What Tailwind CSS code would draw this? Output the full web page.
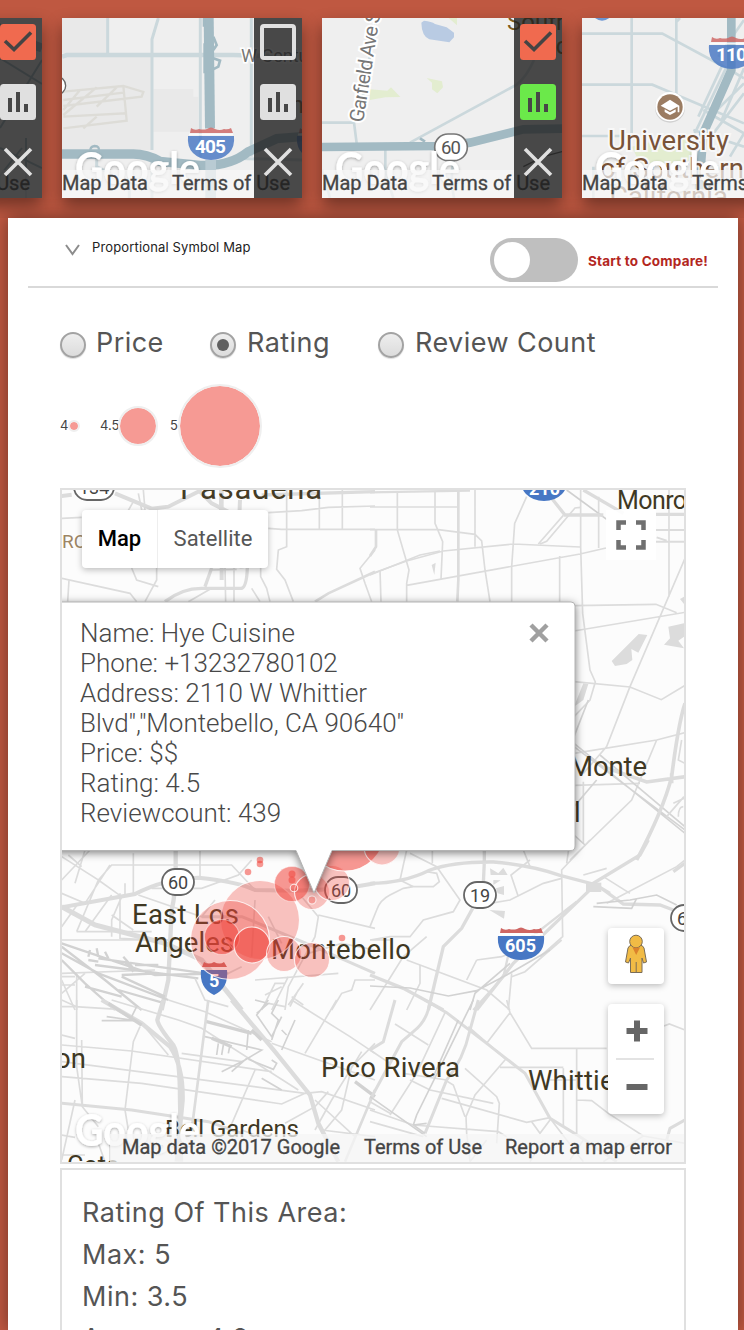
<!DOCTYPE html>
<html lang="en">
<head>
<meta charset="utf-8">
<title>Proportional Symbol Map</title>
<script src="https://cdn.jsdelivr.net/npm/@tailwindcss/browser@4"></script>
</head>
<body class="w-[744px] h-[1330px] overflow-hidden bg-[#bf5841] font-['Inter',sans-serif]">

<!-- shared symbols -->
<svg class="absolute w-0 h-0" aria-hidden="true">
  <defs>
    <filter id="soft" x="-20%" y="-20%" width="140%" height="160%"><feDropShadow dx="0" dy="1" stdDeviation="1.8" flood-color="#000" flood-opacity=".32"/></filter>
    <symbol id="interstate" viewBox="0 0 48 34" overflow="visible">
      <path d="M3 6 L4 1 Q8 4 12 2 Q16 3 20 2 Q24 -1 28 2 Q33 4 37 2 Q41 3 44 1 L46 6 Z" fill="#cf6663"/>
      <path d="M1 9 H47 Q48 20 42 26 Q35 33 24 33 Q13 33 6 26 Q0 20 1 9Z" fill="#4777c4"/>
      <path d="M2 7.5H46" stroke="#fff" stroke-width="2"/>
    </symbol>
    <g id="credits">
      <rect x="0" y="152" width="240" height="28" fill="#f6f6f6" fill-opacity=".72"/>
      <g font-family="Roboto, sans-serif" font-size="20" fill="#444" stroke="#444" stroke-width=".3">
        <text x="0" y="172" textLength="86">Map Data</text>
        <text x="110" y="172" textLength="118">Terms of Use</text>
      </g>
    </g>
    <g id="logo" filter="url(#soft)">
      <text x="13" y="166" font-family="Lato, sans-serif" font-weight="700" font-size="43" fill="#fff" textLength="125" lengthAdjust="spacingAndGlyphs">Google</text>
    </g>
    <g id="bars"><path d="M8 14h4v14h-4zM16 8h4v20h-4zM24 20h4v8h-4z" fill="#474747"/></g>
  </defs>
</svg>

<header class="h-[218px] w-[744px] overflow-hidden">
 <div class="ml-[-198px] flex w-[1020px] gap-5 pt-[18px]">

  <!-- card 1 -->
  <section class="relative h-[180px] w-[240px] shrink-0 bg-[#efefef] shadow-[0_8px_16px_rgba(0,0,0,0.42)]">
    <svg class="block" width="240" height="180" viewBox="0 0 240 180">
      <g fill="none" stroke="#a2bac3"><path d="M185 -10 L198 14 L240 30" stroke-width="9"/><path d="M240 42 L198 110 M198 40 L240 66 M198 130 L240 150 M224 120 V180 M192 165 L220 130" stroke-width="2"/></g>
      <use href="#credits"/>
    </svg>
    <div class="absolute inset-y-0 right-0 flex w-12 flex-col items-center gap-6 bg-[#1e1e1e]/80 pt-[6px]">
      <svg class="shrink-0" width="36" height="36" viewBox="0 0 36 36"><rect width="36" height="36" rx="3.5" fill="#f06a4f"/><path d="M5 17 L14 25.500 L31 8.500" fill="none" stroke="#444" stroke-width="3.600"/></svg>
      <svg class="shrink-0" width="36" height="36" viewBox="0 0 36 36"><rect width="36" height="36" rx="3.5" fill="#e0e0e0"/><use href="#bars"/></svg>
      <svg class="shrink-0" width="36" height="36" viewBox="0 0 36 36"><path d="M5 5 L31 31 M31 5 L5 31" stroke="#e0e0e0" stroke-width="3.600"/></svg>
    </div>
  </section>

  <!-- card 2 -->
  <section class="relative h-[180px] w-[240px] shrink-0 bg-[#efefef] shadow-[0_8px_16px_rgba(0,0,0,0.42)]">
    <svg class="block" width="240" height="180" viewBox="0 0 240 180">
      <g transform="translate(-62 -18) scale(.33333)" fill="none">
        <path d="M186 170H455V450H186Z" fill="#e9e9e9"/><path d="M186 54H322V160H186Z M460 267H580V290H595V395H460Z" fill="#e9e9e9"/>
        <g stroke="#cbd8dc" stroke-width="9"><path d="M186 170 L200 165 H700 L906 172" stroke-width="14"/><path d="M323 54V160"/><path d="M475 54 L456 118 V450"/><path d="M601 54V470"/><path d="M754 54V470"/><path d="M456 470V594 M388 510V594 M640 500V594 M700 475L906 480 M290 470 V500 L330 520"/></g>
        <g stroke="#dddcd7" stroke-width="7"><path d="M190 275 L370 258 L430 276 L425 290 L190 318 M190 300 L370 278 M190 350 L378 340 L380 362 L190 385 M370 258 L378 340 M190 345 L290 262 M240 270 L190 330 M290 320 L350 262 M250 385 L290 350"/></g>
        <g stroke="#a2bac3"><path d="M186 462 H400 Q440 462 480 484 L600 496 Q690 500 745 455 L830 416 L906 410" stroke-width="28"/><path d="M626 50 L630 385" stroke-width="30"/><path d="M612 54V80 M640 110 L650 135 L640 150 M614 130 V190 L614 220 M640 175 L660 182 L655 200 L620 218" stroke-width="8"/><path d="M272 455 Q268 440 284 438 Q300 438 296 455" stroke-width="7"/></g>
        <path d="M632 480V594" stroke="#b9cbd3" stroke-width="32" />
        <circle cx="170" cy="257" r="27" fill="#fff" stroke="#666" stroke-width="4"/>
      </g>
      <text x="179" y="44" font-family="Roboto, sans-serif" font-size="18" fill="#777" stroke="#fff" stroke-width="3" paint-order="stroke">W Century</text>
      <text x="216" y="95" font-family="Roboto, sans-serif" font-size="24" fill="#7d5c3f">enn</text>
      <g opacity=".82"><use href="#interstate" x="125" y="109" width="48" height="34"/><use href="#interstate" x="234" y="109" width="48" height="34"/></g>
      <text x="133" y="135" font-family="Roboto, sans-serif" font-weight="700" font-size="19" fill="#fff" textLength="31">405</text>
      <use href="#logo"/><use href="#credits"/>
    </svg>
    <div class="absolute inset-y-0 right-0 flex w-12 flex-col items-center gap-6 bg-[#1e1e1e]/80 pt-[6px]">
      <svg class="shrink-0" width="36" height="36" viewBox="0 0 36 36"><rect x="2" y="2" width="32" height="32" rx="2" fill="none" stroke="#e0e0e0" stroke-width="4"/></svg>
      <svg class="shrink-0" width="36" height="36" viewBox="0 0 36 36"><rect width="36" height="36" rx="3.5" fill="#e0e0e0"/><use href="#bars"/></svg>
      <svg class="shrink-0" width="36" height="36" viewBox="0 0 36 36"><path d="M5 5 L31 31 M31 5 L5 31" stroke="#e0e0e0" stroke-width="3.600"/></svg>
    </div>
  </section>

  <!-- card 3 -->
  <section class="relative h-[180px] w-[240px] shrink-0 bg-[#efefef] shadow-[0_8px_16px_rgba(0,0,0,0.42)]">
    <svg class="block" width="240" height="180" viewBox="0 0 240 180">
      <g transform="translate(-12 -18) scale(.33333)" fill="none">
        <path d="M334 68 L342 62 Q365 64 375 72 L410 82 L432 98 V112 L418 127 L358 118 Q335 108 334 68Z" fill="#b9cbe3"/>
        <path d="M416 54H441V76Z M350 234 L396 244 L399 262 L382 280 L366 268 V248Z M180 268 L232 272 L243 262 L271 291 L226 292 L180 300Z" fill="#e3edd0"/>
        <g stroke="#cbd8dc" stroke-width="8"><path d="M36 368H132 L140 430"/><path d="M300 428 L620 254 Q650 230 672 180"/><path d="M226 450V520 L250 594 M430 480 Q420 540 432 594 M36 510 L60 594 M200 54 L150 340"/></g>
        <g stroke="#a2bac3"><path d="M36 441 L380 438 L480 428 L640 388 L756 386" stroke-width="26"/><path d="M330 415 L345 425" stroke-width="8"/></g>
        <g stroke="#555" stroke-width="4"><path d="M640 500 L700 470 L756 455"/></g>
        <rect x="374" y="402" width="98" height="80" rx="40" fill="#fff" stroke="#777" stroke-width="5"/>
      </g>
      <g font-family="Roboto, sans-serif"><text x="119" y="136" font-size="18.500" fill="#555" textLength="20">60</text>
      <text x="185" y="12" font-size="24" fill="#7d5c1f">South</text><text x="240" y="36" font-size="24" text-anchor="middle" fill="#7d5c1f">c</text>
      <text transform="translate(41 105) rotate(-81)" font-size="20" fill="#777" stroke="#fff" stroke-width="4" paint-order="stroke" textLength="112">Garfield Ave S</text></g>
      <use href="#logo"/><use href="#credits"/>
    </svg>
    <div class="absolute inset-y-0 right-0 flex w-12 flex-col items-center gap-6 bg-[#1e1e1e]/80 pt-[6px]">
      <svg class="shrink-0" width="36" height="36" viewBox="0 0 36 36"><rect width="36" height="36" rx="3.5" fill="#f06a4f"/><path d="M5 17 L14 25.500 L31 8.500" fill="none" stroke="#444" stroke-width="3.600"/></svg>
      <svg class="shrink-0" width="36" height="36" viewBox="0 0 36 36"><rect width="36" height="36" rx="3.5" fill="#6be94a"/><use href="#bars"/></svg>
      <svg class="shrink-0" width="36" height="36" viewBox="0 0 36 36"><path d="M5 5 L31 31 M31 5 L5 31" stroke="#e0e0e0" stroke-width="3.600"/></svg>
    </div>
  </section>

  <!-- card 4 -->
  <section class="relative h-[180px] w-[240px] shrink-0 bg-[#efefef] shadow-[0_8px_16px_rgba(0,0,0,0.42)]">
    <svg class="block" width="240" height="180" viewBox="0 0 240 180">
      <g transform="translate(-272 -18) scale(.33333)" fill="none">
        <path d="M965 440 L1130 400 L1160 490 L990 490Z" fill="#e3edd0"/>
        <g stroke="#cbd8dc" stroke-width="8"><path d="M816 101H1057 L1260 210 L1302 235"/><path d="M965 54V400 M1099 54V300"/><path d="M816 254H1027 L1302 370"/><path d="M816 408H930"/><path d="M1100 65L1110 54 M1140 430 L1250 200 M1190 360 L1302 250 M1210 400 L1302 280 M1235 360 L1302 205 M1180 330 L1302 400 M1150 390 L1302 440 M1165 350L1235 200 M1302 60 L1225 170 M1260 470 L1302 400"/><path d="M850 500V594 M1060 500V594 M1160 520V594"/></g>
        <path d="M1264 54V210 L1180 400 L1165 594" stroke="#a2bac3" stroke-width="26"/>
        <path d="M855 54 Q876 70 898 54Z" fill="#6b95d3"/>
        <circle cx="1080" cy="323" r="45" fill="#999" opacity=".35"/><circle cx="1080" cy="320" r="44" fill="#fff"/><circle cx="1080" cy="321" r="38" fill="#9b7c62"/>
        <path d="M1052 317 L1080 299 L1108 317 L1080 332Z M1064 328 L1080 337 L1097 328 V336 L1080 345 L1064 336Z M1103 317H1108V337H1103Z" fill="#fff"/>
      </g>
      <g opacity=".82"><use href="#interstate" x="126" y="18" width="48" height="34"/></g>
      <g font-family="Roboto, sans-serif"><text x="134" y="43" font-weight="700" font-size="19" fill="#fff" textLength="31">110</text>
      <g font-size="27.500" fill="#785338" stroke="#f8f8f8" stroke-width="4" paint-order="stroke"><text x="26" y="132" textLength="121">University</text><text x="18" y="160" textLength="144">of Southern</text><text x="28" y="188" textLength="118">California</text></g></g>
      <use href="#logo"/><use href="#credits"/>
    </svg>
  </section>
 </div>
</header>

<main class="relative mx-2 mr-[6px] h-[1112px] bg-white px-5 shadow-[0_0_16px_rgba(0,0,0,0.4)]">

  <div class="flex h-[70px] items-start border-b-2 border-[#d9d9d9] pl-[37px] pr-[10px]">
    <svg class="mt-[25px]" width="15" height="13" viewBox="0 0 15 13"><path d="M1 2 L7.500 11 L14 2" fill="none" stroke="#8c8c8c" stroke-width="2"/></svg>
    <h1 class="ml-3 mt-[19px] whitespace-nowrap text-[13px] leading-5 tracking-[0.15px] text-[#222]">Proportional Symbol Map</h1>
    <div class="ml-auto mt-5 h-11 w-[88px] rounded-full bg-[#bfbfbf] p-1"><div class="size-9 rounded-full bg-white"></div></div>
    <span class="ml-[10px] mt-[33px] w-[120px] whitespace-nowrap text-[13.5px] font-bold leading-5 tracking-[0.2px] text-[#b3261e]">Start to Compare!</span>
  </div>

  <div class="pl-8 pr-8">
    <!-- measure selector -->
    <div class="flex h-[98px] items-start pt-9 text-[27px] leading-[37px] tracking-[0.45px] text-[#555]">
      <label class="flex w-[150px] items-start gap-[10px]"><i class="mt-[8px] size-[26px] shrink-0 rounded-full border-2 border-[#a3a3a3] bg-linear-to-b from-[#eee] to-[#dcdcdc] shadow-[0_1px_1px_#ddd]"></i><span>Price</span></label>
      <label class="flex w-[168px] items-start gap-[11px]"><i class="mt-[8px] flex size-[26px] shrink-0 items-center justify-center rounded-full border-2 border-[#a3a3a3] bg-linear-to-b from-[#eee] to-[#dcdcdc] shadow-[0_1px_1px_#ddd]"><b class="size-3 rounded-full bg-[#606060]"></b></i><span>Rating</span></label>
      <label class="flex items-start gap-[11px] whitespace-nowrap"><i class="mt-[8px] size-[26px] shrink-0 rounded-full border-2 border-[#a3a3a3] bg-linear-to-b from-[#eee] to-[#dcdcdc] shadow-[0_1px_1px_#ddd]"></i><span>Review Count</span></label>
    </div>

    <!-- legend -->
    <div class="flex h-20 items-center text-[13px] text-[#444]">
      <span class="w-[10px]">4</span><i class="size-2 rounded-full bg-[#f69a94] outline-2 outline-[#efefef]"></i>
      <span class="ml-[22px] w-5 whitespace-nowrap">4.5</span><i class="size-9 rounded-full bg-[#f69a94] outline-2 outline-[#efefef]"></i>
      <span class="ml-[14px] w-[10px]">5</span><i class="size-20 rounded-full bg-[#f69a94] outline-2 outline-[#efefef]"></i>
    </div>

    <!-- map -->
    <div class="relative mt-[22px] h-[676px] w-[626px] overflow-hidden border-2 border-[#e0e0e0] bg-[#fcfcfc]">
      <svg class="block" width="622" height="672" viewBox="62 490 622 672">
        <!-- north-west streets -->
        <g transform="translate(55 480) scale(.33333)" fill="none" stroke="#dcdcdc" stroke-width="5">
          <path d="M20 48 L50 44 M180 40 L290 86 L340 80 L440 30 M500 30 V300 M430 30 L470 70 L520 95" stroke-width="12"/>
          <path d="M620 45 L960 35" stroke-width="10"/>
          <path d="M497 30V90 M470 264 L450 320 M330 365 Q380 325 440 325 H560 Q575 320 577 264" stroke-width="10"/>
          <path d="M20 115 L80 112 M20 295 L225 340 L245 365 M42 300 L38 365 M250 40 L260 90 M235 65 L215 100 L270 90 L265 30 M230 264 L245 300 L310 320 M305 264 V300 L270 365"/>
          <path d="M640 98 L740 92 L820 82 L960 78 M640 145 L680 148 H960 M695 30 V200 L670 210 L665 268 L690 300 L715 365 M793 30V148 M862 30V148 M960 210 L915 265 L930 310 L950 365 M617 264 V290 L635 325 L645 365 M510 264 L512 365 M537 264V365 M470 270 L545 268 M400 365 L470 325 M590 325 L615 365"/>
          <path d="M780 365 L820 340 L960 275" stroke-width="8"/><path d="M555 60 Q550 160 560 265" stroke-width="12"/>
        </g>
        <!-- north-east streets -->
        <g transform="translate(370 480) scale(.33333)" fill="none" stroke="#dcdcdc" stroke-width="5">
          <path d="M0 37 L300 32" stroke-width="7"/><path d="M265 35V300 L262 365 M18 150V200 L0 228" stroke-width="8"/>
          <path d="M0 81H262 M0 149H205 L315 163 L335 183 L345 270 L360 365 M82 35V150 L117 270 L110 310 V365 M195 35V130 L218 185 L213 298 M315 30V200 M110 316 L630 222 L708 204 M0 283 L110 243 L220 213 L430 192 L630 201 M425 365 V260 L434 130 L470 50 M30 270 L33 365 M569 228V365 M632 30V201 L638 400 L660 570 L676 606 L660 660 L612 710 M686 50V204"/>
          <path d="M590 30 L710 118" stroke="#d0d0d0"/><path d="M0 285 L150 225 L210 213 M505 192 L580 106 M510 192 L530 184 L615 84 L632 82"/>
          <path d="M640 30 L760 100 M545 55 L585 105 H700 M858 103H945" stroke-width="10"/><path d="M858 150H945 M858 185H945 M860 172L890 182" stroke-width="6"/>
          <path d="M897 30V350 M945 235 L780 620 L710 800 L640 880 M612 377 L858 373 L920 398 M612 453 L945 397 M612 605 L780 621 L874 659 L945 616 M612 820 L860 780 L945 758 M612 916 L810 910 M860 780 L785 960 L600 1140 M640 905V1090"/>
          <path d="M612 790 L945 1060 M612 800 L945 1050 M690 825 L945 1040 M680 900L612 980 M612 1065L645 1095 M612 770L655 660" stroke="#d4d4d4"/>
          <path d="M700 860 L830 906 L945 890 M905 880V910 M945 670 Q925 730 905 890 Q880 990 800 1140" stroke-width="11"/>
          <path d="M725 543 L806 462 L832 465 L805 518 L784 507 L787 540 L770 552 L735 558Z M895 440 L942 430 V470 L925 482 L942 505 L882 494 L900 475Z M930 357 L942 350 V372Z M185 255 L197 248 L193 285Z M612 680 L640 610 L655 612 L640 660Z" fill="#dcdcdc" stroke="none"/>
          <path d="M910 970 L942 955 M890 1010 L942 950 M925 1010 Q925 980 940 980 M935 780L925 840 L945 850"/>
        </g>
        <!-- central-west streets -->
        <g transform="translate(55 840) scale(.33333)" fill="none" stroke="#dcdcdc" stroke-width="5">
          <path d="M362 30V90 Q362 160 350 210 L340 420 L320 510" stroke-width="13"/>
          <path d="M20 202 L240 162 Q330 115 430 113 Q550 125 600 150 L720 152 Q860 150 960 130" stroke-width="12"/>
          <path d="M20 200 L120 255 L330 310 L440 360 L560 510" stroke-width="15"/>
          <path d="M440 230 L560 230 Q760 310 960 400" stroke-width="9"/>
          <path d="M20 50 L130 120 L170 75 H530 L600 150 M20 120 L105 30 M20 160 L90 190 L165 75 M60 130 L90 30 M40 45L80 80 M130 120 L200 170 L170 240 V290 M65 275 L130 120 M170 225L235 270 M195 160V295 L290 300 M90 275L170 165 M70 190L20 260 M210 130V170 M235 40V160 M435 30V110 M20 300H340 M65 275 H290 M290 145H440 L550 105 L590 60"/>
          <path d="M740 170 L790 230 L780 290 L700 440 L690 510 M790 225 L960 265 M600 180 L590 350 M640 230 L680 310 M960 330 L860 310 L760 340 M430 400 H520 L560 380 M250 165 L440 230 L480 180 M20 400 L300 390 M20 420 L60 510 M65 400V510 M20 410H60 M20 435H60 M20 460L90 400"/>
          <g stroke="#d2d2d2" stroke-width="7"><path d="M20 340 L130 400 L340 480 M20 320 L150 420 L260 510 M20 310 L300 405 L520 400 M20 360 L90 430 L180 510 M130 355 L450 400 M120 375 L430 415 M100 360L130 365 M105 330L100 350 M125 325L130 350 M150 335L160 355 M205 350L240 390 M210 365L235 395 M200 405L310 400 M240 375H310 M200 410L330 470 M190 450 L330 490 M90 440L200 470"/></g>
          <path d="M620 510 L660 430 L690 430 M630 465 L680 440 M640 490L690 500 M700 495 L745 430 M705 500L730 450 M600 420 L850 400 M830 510 L860 460 L890 450 L900 420 H960 M650 510L700 410 M420 415L450 480 L520 500 M20 480L65 500 M710 470 L745 495"/>
        </g>
        <!-- central-east streets -->
        <g transform="translate(370 840) scale(.33333)" fill="none" stroke="#dcdcdc" stroke-width="5">
          <path d="M0 130 Q100 130 180 90 Q250 65 370 66 Q480 75 570 106 L680 135 L760 192 L870 195 L910 210 M343 30V66 L340 130 M308 205 L275 265 L220 320 L175 510 M720 160 L670 130 L810 45 L835 0 M670 140 L430 370 L320 510 M945 70L910 95" stroke-width="10"/>
          <path d="M620 185 L415 345 L400 410 L310 510" stroke-width="7"/><path d="M648 142H694" stroke-width="28"/>
          <path d="M20 210 Q30 180 60 165 L100 145 L130 140 L190 140 L208 125 L200 100 L170 95 M20 210 L0 260 M110 30 L90 120 L130 140 M187 30V70 M120 40 L200 80 L270 180 L250 215 L160 240 L120 290 H60 L0 300 M480 60 L423 105 L445 170 M360 190 L420 180 L520 130 L575 115 M460 30 L480 80 M660 0 L575 90 L578 290 L510 350 M710 85 L640 105 M700 110 L780 160 M590 70 L600 0 M710 190 L920 80 L945 60 M0 300H60 M170 290 L100 350 L0 510 M110 360 L350 450 L420 510 M320 360 L290 420 M320 360 L395 350 L420 340 M425 400 L415 510 M425 410 L465 395 L575 300"/>
          <path d="M0 405 L100 445 L220 510" stroke-width="10"/><path d="M150 375V430 L110 510"/>
          <path d="M0 438 L120 444 L235 468 L320 452 L410 405 L540 330 M680 190 L780 180 L860 165 L920 195 M670 200 L785 205 L800 175 M300 510 L315 460 L420 370" stroke="#d2d2d2"/>
          <path d="M360 85 L385 100 L400 83 L413 105 H362Z M370 120 L392 121 L370 135Z M378 145 L402 138 V165 L383 160Z M358 210 L405 213 L402 236Z" fill="#dcdcdc" stroke="none"/>
        </g>
        <!-- south-west streets -->
        <g transform="translate(55 1000) scale(.33333)" fill="none" stroke="#dcdcdc" stroke-width="5">
          <path d="M140 0 L260 70 L345 140 Q385 200 383 300 L365 485 M325 0 L307 60 Q310 80 355 135 Q375 170 375 300 L378 485 M530 0 L660 155 L765 285 L790 370 L850 485" stroke-width="13"/>
          <path d="M20 310 L230 330 L460 365 L560 400" stroke-width="9"/><path d="M460 0 L410 390 M960 270 L870 485" stroke-width="8"/>
          <path d="M65 0V200 L82 320 L130 380 M20 135 L230 153 L650 215 M20 185 L750 280 L800 275 L960 330 M20 230 L260 250 L680 312 L760 275 M20 105L60 115 M20 20H60 L190 28 M255 80 L235 125 L210 330 L220 390 M170 0 L370 60 L440 85 L730 270 M380 160 L560 185 M260 70 L340 165 M340 0 L450 35 L650 125 M520 395 L600 210 M710 0 L885 110 L960 160 M845 0 L750 160 M650 130 L960 240 M960 130 L890 200 L860 330 L810 390 M780 390 L830 300 L920 155 M690 370 L780 320 L820 275 M560 390L640 420 M800 390 L960 410 M780 300 L900 410 M80 120 L82 320 M20 480 L60 300 M130 430L150 485 M165 430V485 M20 405L60 412 M20 465 H90"/>
          <g stroke="#d2d2d2"><path d="M140 62H240 M155 50L230 60 M225 60L245 20 M450 110 L620 150 L570 180 L500 215 M490 130L485 165 M505 135L500 165 M525 135L520 160 M580 90L575 150 M650 120 L670 60 L650 40 L670 0 M720 60 L680 150 M680 90L695 105 M605 40 L640 10 L600 0 M640 0L605 45L650 110 L680 50 M650 180 L665 190 L655 208 L580 178 M575 175L530 215 M620 235L680 270"/><path d="M455 65 L590 100 M470 115 L530 140 M160 10L260 75 M590 90L620 120 M900 245 L960 290" stroke-width="10"/></g>
        </g>
        <!-- south-east streets -->
        <g transform="translate(370 1000) scale(.33333)" fill="none" stroke="#dcdcdc" stroke-width="5">
          <path d="M165 0 L230 38 L350 130 L465 220 L540 355 L630 410 L740 485 M180 0 Q175 60 130 95 L95 125 L60 190 L0 300 M325 0 L300 90 Q280 180 230 240 L165 400 M75 0 L40 125 L0 150 M890 420 L900 385 L945 360" stroke-width="9"/>
          <path d="M60 345 L140 220 L225 38 M75 72 L175 135 M120 240L180 270 L370 310 M295 80 L410 180 M405 180 L315 285 L288 350 L290 400 L300 485 M285 205 L380 290 L388 310 L380 430 M225 240 L250 255 L285 350 M215 295 L470 367 L540 353 M485 365 L510 400 L540 360 M410 0 L420 38 L485 145 H710 M420 38 L350 130 M390 202 H580 M580 205V380 M620 145V400 M622 300 L665 302 L715 340 L820 408 L945 430 M882 78 L898 72 L945 90 M540 355 L640 485 M0 305 L60 340 M0 330 L130 375 L385 395 L410 410 M540 240 H620 M0 365L160 410 M300 485L350 420 M480 485L520 420 M700 485L820 408 M0 150L60 190 M100 220L230 240 M600 480L640 420"/>
          <path d="M310 0 L140 345 L130 375 L165 400 M265 60L190 230 M0 290 L170 410 M130 375 L170 370" stroke="#d2d2d2"/>
        </g>

        <!-- place names and shields -->
        <g font-family="Roboto, sans-serif" font-size="27.500" fill="#3f3823">
          <text x="180" y="499" font-size="31" textLength="142" fill="#453c26">Pasadena</text>
          <text x="617" y="509" font-size="25" textLength="100">Monrovia</text>
          <text x="62" y="548" font-size="19" fill="#9d8564" stroke="#fff" stroke-width="2" paint-order="stroke">ROS</text>
          <text x="569" y="776" textLength="78">Monte</text>
          <text x="574" y="822" font-size="27">l</text>
          <text x="132" y="924" textLength="107">East Los</text>
          <text x="135" y="952" textLength="99">Angeles</text>
          <text x="271" y="959" textLength="140">Montebello</text>
          <text x="321" y="1077" textLength="139">Pico Rivera</text>
          <text x="528" y="1090" textLength="96">Whittier</text>
          <text x="55" y="1068">on</text>
          <text x="165" y="1137" font-size="24" textLength="134">Bell Gardens</text>
          <text x="67" y="1174" font-size="25">Gate</text>
        </g>
        <g fill="#fff" stroke="#666" stroke-width="1.8">
          <rect x="74" y="474" width="40" height="26" rx="13"/><rect x="162" y="869" width="32" height="26" rx="13"/><rect x="325" y="877" width="32" height="26" rx="13"/><rect x="464" y="882" width="32" height="26" rx="13"/><rect x="671" y="905" width="32" height="26" rx="13"/>
        </g>
        <g font-family="Roboto, sans-serif" font-size="18" fill="#444">
          <text x="79" y="494">134</text><text x="168" y="888.500">60</text><text x="331" y="896.500">60</text><text x="470" y="901.500">19</text><text x="677" y="925">60</text>
        </g>
        <use href="#interstate" x="520" y="468" width="48" height="34"/><use href="#interstate" x="497" y="927" width="48" height="34"/>
        <path d="M202 967 L204 962 Q209 965 214 962 Q220 965 224 962 L227 967Z" fill="#cf6663"/><path d="M201 970H227Q229 988 214 995Q199 988 201 970Z" fill="#4777c4"/>
        <g font-family="Roboto, sans-serif" font-weight="700" font-size="18" fill="#fff"><text x="529" y="495">210</text><text x="505" y="952" textLength="31">605</text><text x="209" y="987">5</text></g>

        <!-- proportional symbols -->
        <g fill="#f0433a" fill-opacity=".32" stroke="#fff" stroke-opacity=".8" stroke-width="1.1">
          <circle cx="260" cy="920" r="39.500"/><circle cx="230" cy="940" r="39.500"/>
          <circle cx="222" cy="937" r="17.500" fill-opacity=".6" stroke-opacity=".4"/><circle cx="252" cy="945" r="18" fill-opacity=".58"/>
          <circle cx="284" cy="954" r="17.500"/><circle cx="312" cy="960" r="17.500"/>
          <circle cx="292" cy="884" r="17.500" fill-opacity=".55" stroke-opacity=".4"/><circle cx="312" cy="892" r="17.500"/>
          <circle cx="332" cy="883" r="17.500"/><circle cx="345" cy="831" r="40" fill-opacity=".55"/><circle cx="382" cy="847" r="18"/>
          <g stroke="none" fill-opacity=".55"><circle cx="248" cy="872" r="3.300"/><circle cx="260" cy="860" r="3.300"/><circle cx="260" cy="864" r="3.300"/><circle cx="342" cy="938" r="3.300"/><circle cx="292" cy="874" r="3.500"/><circle cx="292" cy="880" r="3.500"/></g>
          <circle cx="294" cy="888" r="3.800"/><circle cx="312" cy="900" r="4"/>
        </g>
      </svg>

      <!-- map type -->
      <div class="absolute left-5 top-5 flex h-[58px] w-[186px] overflow-visible rounded-[4px] bg-white font-['Roboto'] text-[22px] leading-[57px] shadow-[0_2px_6px_rgba(0,0,0,0.25)]">
        <span class="w-[76px] border-r border-[#eee] text-center font-medium text-black">Map</span>
        <span class="flex-1 text-center text-[#565656]">Satellite</span>
      </div>
      <div class="absolute left-[544px] top-5 size-[50px] bg-white/90">
        <svg width="50" height="50" viewBox="0 0 50 50"><path d="M12.500 20V12.500H20M30 12.500H37.500V20M37.500 30V37.500H30M20 37.500H12.500V30" fill="none" stroke="#707070" stroke-width="4.500"/></svg>
      </div>

      <!-- street view -->
      <div class="absolute left-[546px] top-[438px] size-14 rounded-[4px] bg-white shadow-[0_2px_6px_rgba(0,0,0,0.25)]">
        <svg width="56" height="56" viewBox="0 0 56 56"><g fill="#f1bb45" stroke="#7b6d57" stroke-width="1"><path d="M20 20 Q21 17 25 17H31Q35 17 36 20L38.500 34L35.500 35L34 30V44.500H22.500V30L20.500 35L17.500 34Z"/><path d="M28.200 34V44" /><circle cx="28" cy="13.500" r="6.300"/></g><path d="M24.500 19.500H32L28.200 27Z" fill="#db822c"/></svg>
      </div>
      <!-- zoom -->
      <div class="absolute left-[546px] top-[514px] h-[110px] w-14 rounded-[4px] bg-white shadow-[0_2px_6px_rgba(0,0,0,0.25)]">
        <svg width="56" height="110" viewBox="0 0 56 110"><path d="M18.500 27H39.500M29 16.500V37.500M18.500 83H39.500" stroke="#666" stroke-width="6"/><path d="M8 55H46" stroke="#e3e3e3" stroke-width="2"/></svg>
      </div>

      <!-- info window -->
      <svg class="absolute left-0 top-[98px]" width="540" height="320" viewBox="62 588 540 320"><path d="M50 602H571Q575 602 575 606V846Q575 850.500 571 850.500H332L314 893L296 850.500H50Z" fill="#fff" stroke="#b3b3b3" stroke-width="1" class="drop-shadow-[0_2px_4px_rgba(0,0,0,0.5)]"/><path d="M531 625L547 641M547 625L531 641" stroke="#a0a0a0" stroke-width="4.500"/></svg>
      <div class="absolute left-[18px] top-[128px] w-[340px] whitespace-nowrap font-['Roboto'] text-[26px] font-light leading-[30px] text-[#484848]">
        <p>Name: Hye Cuisine</p>
        <p>Phone: +13232780102</p>
        <p>Address: 2110 W Whittier<br>Blvd","Montebello, CA 90640"</p>
        <p>Price: $$</p>
        <p>Rating: 4.5</p>
        <p>Reviewcount: 439</p>
      </div>

      <!-- attribution -->
      <svg class="absolute bottom-0 left-0" width="622" height="60" viewBox="62 1102 622 60">
        <text x="75" y="1146" filter="url(#soft)" font-family="Lato, sans-serif" font-weight="700" font-size="43" fill="#fff" textLength="125" lengthAdjust="spacingAndGlyphs">Google</text>
        <rect x="110" y="1134" width="574" height="28" fill="#f5f5f5" fill-opacity=".75"/>
        <g font-family="Roboto, sans-serif" font-size="20" fill="#444" stroke="#444" stroke-width=".3"><text x="122" y="1154" textLength="218">Map data ©2017 Google</text><text x="364" y="1154" textLength="118">Terms of Use</text><text x="505" y="1154" textLength="167">Report a map error</text></g>
      </svg>
    </div>

    <!-- statistics -->
    <div class="mt-1 h-[162px] w-[626px] overflow-hidden border-2 border-b-0 border-[#e0e0e0] px-5 pt-[22px] text-[27px] leading-[42px] tracking-[0.5px] text-[#555]">
      <p>Rating Of This Area:</p>
      <p>Max: 5</p>
      <p>Min: 3.5</p>
      <p>Average: 4.2</p>
    </div>
  </div>
</main>
</body>
</html>
